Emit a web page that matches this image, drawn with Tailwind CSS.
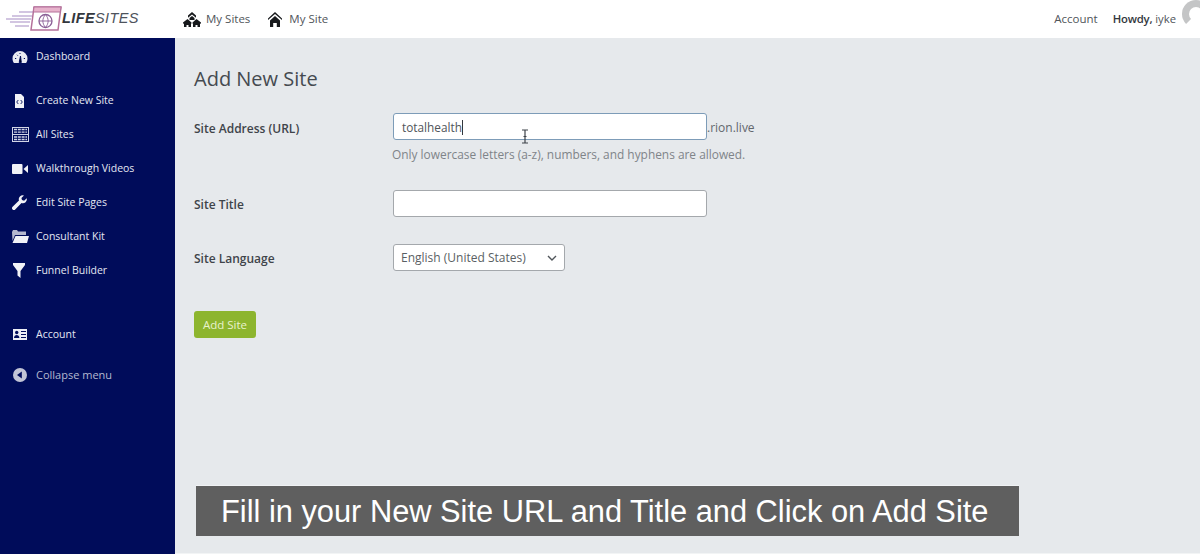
<!DOCTYPE html>
<html>
  <head>
    <title>Add New Site</title>
    <meta name="viewport" content="width=device-width, initial-scale=1.0" />
    <script src="https://cdn.jsdelivr.net/npm/@tailwindcss/browser@4"></script>
  </head>
  <body class="h-[554px] w-[1200px] overflow-hidden bg-[#e6e9ec] font-['Open_Sans',sans-serif] text-[#3f444a]">
    <!-- top bar -->
    <header class="flex h-[38px] items-center bg-white pr-6 text-[11px] text-[#50555a]">
      <div class="flex w-[183px] items-center pl-[5px]">
        <svg width="57" height="30" viewBox="0 0 57 30" fill="none">
          <path d="M14 8h14M7 12h20M1 15h25M5 18h20M10 22h14" stroke="#a58cc4" stroke-width="1.200" />
          <path d="M29 3h27l-3 23H26z" fill="#fff" stroke="#b4709a" stroke-width="1.500" />
          <path d="M29 3h27l-.7 5H28.400z" fill="#e7b3cc" stroke="#b4709a" stroke-width="1" />
          <circle cx="40.500" cy="17" r="6.500" stroke="#8a5f96" stroke-width="1.300" />
          <path d="M34 17h13M40.500 10.500c-3.500 4-3.500 9 0 13M40.500 10.500c3.500 4 3.500 9 0 13" stroke="#8a5f96" stroke-width=".9" />
        </svg>
        <span class="font-['Liberation_Sans',sans-serif] text-[14.500px] tracking-[0.4px] text-[#4d535c] italic"><b class="text-[#33373d]">LIFE</b>SITES</span>
      </div>
      <div class="flex items-center gap-[5px]">
        <svg width="18" height="15" viewBox="0 0 18 15" fill="#17191c">
          <path d="M9 0l4 3.600v2.200L9 2.600 5 5.800V3.600z" />
          <path d="M6.500 6L9 4l2.500 2v2h-5z" />
          <path d="M4.500 7L0 10.600v1l1 .2V15h2.500v-2h2v2H8v-3.200l.5-.2v-1zM13.500 7L18 10.600v1l-1 .2V15h-2.500v-2h-2v2H10v-3.200l-.5-.2v-1z" />
        </svg>
        <span class="text-[11.500px]">My Sites</span>
      </div>
      <div class="ml-[18px] flex items-center gap-[7px]">
        <svg width="14" height="15" viewBox="0 0 14 15" fill="#17191c">
          <path d="M7 0l7 6.500V8L7 2 0 8V6.500zM2 8.500L7 4l5 4.500V15H8.800v-4H5.200v4H2z" />
        </svg>
        <span class="text-[11.500px]">My Site</span>
      </div>
      <div class="ml-auto flex items-center">
        <span class="text-[11.500px]">Account</span>
        <span class="ml-[15px] text-[11.300px]"><span class="font-semibold tracking-[-0.2px] text-[#33373d]">Howdy,</span> iyke</span>
      </div>
    </header>
    <div class="flex h-[516px]">
      <!-- sidebar -->
      <nav class="h-full w-[175px] shrink-0 bg-[#000c5a] pt-[2px] text-[10.500px] font-medium text-[#e4e7f2]">
        <a class="flex h-[34px] items-center gap-[8px] pl-3">
          <svg width="16" height="14" viewBox="0 0 16 14" class="-mt-px shrink-0"><path d="M8 1a7.500 7.500 0 0 0-7.500 7.500c0 1.900.6 3.300 1.400 4.500h12.200c.8-1.200 1.400-2.600 1.400-4.500A7.500 7.500 0 0 0 8 1z" fill="#e9ebf3" /><path d="M7.200 12.500L8.500 6l.8 6.500zM3 8.500h1.200M11.800 8.500H13M5 4.800l.8.8M8 3v1" stroke="#000c5a" stroke-width="1" /></svg>
          <span>Dashboard</span>
        </a>
        <a class="mt-[10px] flex h-[34px] items-center gap-[12px] pl-[15px]">
          <svg width="9" height="14" viewBox="0 0 9 14" class="-mt-px shrink-0"><path d="M0 0h6l3 3v11H0z" fill="#f1f2f7" /><path d="M3.300 6L1.700 8l1.600 2M5.700 6l1.600 2-1.600 2" stroke="#000c5a" stroke-width=".9" fill="none" /></svg>
          <span>Create New Site</span>
        </a>
        <a class="flex h-[34px] items-center gap-[7px] pl-3">
          <svg width="17" height="15" viewBox="0 0 17 15" class="-mt-px shrink-0" fill="none" stroke="#d2d5e6"><rect x=".5" y=".5" width="16" height="14" /><path d="M0 7.500h17" /><path d="M2 2.500h13M2 5.200h13M2 10h13M2 12.500h13" stroke-width="1.300" stroke-dasharray="3 .8" /></svg>
          <span>All Sites</span>
        </a>
        <a class="flex h-[34px] items-center gap-[8px] pl-3">
          <svg width="16" height="10" viewBox="0 0 16 10" class="-mt-px shrink-0" fill="#f1f2f7"><rect width="10.500" height="10" rx="1" /><path d="M11.500 5L16 1v8z" /></svg>
          <span>Walkthrough Videos</span>
        </a>
        <a class="flex h-[34px] items-center gap-[9px] pl-3">
          <svg width="15" height="15" viewBox="0 0 15 15" class="-mt-px shrink-0" fill="#f1f2f7"><path d="M14.700 3.200l-2.600 2.500-2.100-.6-.6-2.100L12 .4A4 4 0 0 0 7 5.500L.6 11.800a1.800 1.800 0 0 0 2.600 2.600L9.500 8a4 4 0 0 0 5.200-4.800z" /></svg>
          <span>Edit Site Pages</span>
        </a>
        <a class="flex h-[34px] items-center gap-[7px] pl-[11px]">
          <svg width="18" height="13" viewBox="0 0 18 13" class="-mt-px shrink-0" fill="#f1f2f7"><path d="M1 2l1-2h4l1 1.500h8V5H4L1.500 11z" opacity=".75" /><path d="M4.500 6H18l-2 7H1.500z" /></svg>
          <span>Consultant Kit</span>
        </a>
        <a class="flex h-[34px] items-center gap-[11px] pl-[13px]">
          <svg width="12" height="15" viewBox="0 0 12 15" class="-mt-px shrink-0" fill="#f1f2f7"><path d="M0 0h12v2L7.500 8v7l-3-2.500V8L0 2z" /></svg>
          <span>Funnel Builder</span>
        </a>
        <a class="mt-[30px] flex h-[34px] items-center gap-[9px] pl-[13px]">
          <svg width="14" height="11" viewBox="0 0 14 11" class="-mt-px shrink-0"><rect width="14" height="11" fill="#eceef5" /><circle cx="3.700" cy="3.500" r="1.700" fill="#000c5a" /><path d="M1 9c0-4 5.400-4 5.400 0zM8 2h5v1H8zM8 5h5v1H8zM8 8h5v1H8z" fill="#000c5a" /></svg>
          <span>Account</span>
        </a>
        <a class="mt-[6px] flex h-[34px] items-center gap-[9px] pl-[13px] font-normal text-[#b4b9d0]">
          <svg width="14" height="14" viewBox="0 0 14 14" class="shrink-0"><circle cx="7" cy="7" r="7" fill="#c2c5d6" /><path d="M8.800 3.500v7L4 7z" fill="#000c5a" /></svg>
          <span class="text-[11px]">Collapse menu</span>
        </a>
      </nav>
      <!-- form -->
      <main class="relative flex-1 pl-[19px]">
        <h1 class="mt-[27px] text-[20px] leading-[28px] text-[#454a50]">Add New Site</h1>
        <div class="mt-[20px] flex">
          <label class="w-[199px] pt-[7px] text-[12px] font-semibold">Site Address (URL)</label>
          <div>
            <div class="flex items-center">
              <div class="flex h-[27px] w-[314px] items-center rounded-[3px] border-[1.500px] border-[#7d9cb8] bg-white pt-[2px] pl-2 text-[11.800px] text-[#50555a]">totalhealth<span class="h-[15px] w-px bg-[#33373d]"></span></div>
              <span class="pt-[2px] text-[12px] text-[#62676c]">.rion.live</span>
            </div>
            <p class="mt-[6px] -ml-px text-[11.900px] leading-[16px] text-[#7f8489]">Only lowercase letters (a-z), numbers, and hyphens are allowed.</p>
          </div>
        </div>
        <div class="mt-[28px] flex items-center">
          <label class="w-[199px] pt-[2px] text-[12px] font-semibold">Site Title</label>
          <div class="h-[27px] w-[314px] rounded-[3px] border border-[#a4a8ac] bg-white"></div>
        </div>
        <div class="mt-[27px] flex items-center">
          <label class="w-[199px] pt-[2px] text-[12px] font-semibold">Site Language</label>
          <div class="flex h-[27px] w-[172px] items-center justify-between rounded-[3px] border border-[#a4a8ac] bg-white pr-[7px] pl-[7px] text-[12px] text-[#5a5f64]">
            <span>English (United States)</span>
            <svg width="10" height="6" viewBox="0 0 10 6" fill="none" stroke="#50555a" stroke-width="1.400"><path d="M1 1l4 4 4-4" /></svg>
          </div>
        </div>
        <button class="mt-[40px] flex h-[27px] w-[62px] items-center justify-center rounded-[3px] bg-[#8db52e] pt-px text-[11.500px] text-[#e8f2cc]">Add Site</button>

        <!-- I-beam cursor, over the input -->
        <svg class="absolute top-[91px] left-[345px]" width="10" height="15" viewBox="0 0 10 15" fill="none" stroke="#3f444a" stroke-width="1.200"><path d="M2 1h6M2 14h6M5 1v13M3.500 7.500h3" /></svg>
        <!-- video caption -->
        <div class="absolute top-[447px] left-[21px] flex h-[51px] w-[823px] items-center border-t border-[#f0f2f4] bg-[#5f5f5f] pt-[2px] pl-[25px] font-['Liberation_Sans',sans-serif] text-[30.800px] text-white">Fill in your New Site URL and Title and Click on Add Site</div>
        <div class="absolute right-0 bottom-0 left-0 h-px bg-[#f2f4f5]"></div>
      </main>
    </div>
    <!-- avatar, cut by the window edge -->
    <div class="absolute top-0 left-[1182px] h-[28px] w-[28px] rounded-full border-[7px] border-[#c4c5c6] border-r-transparent border-b-transparent"></div>
  </body>
</html>
